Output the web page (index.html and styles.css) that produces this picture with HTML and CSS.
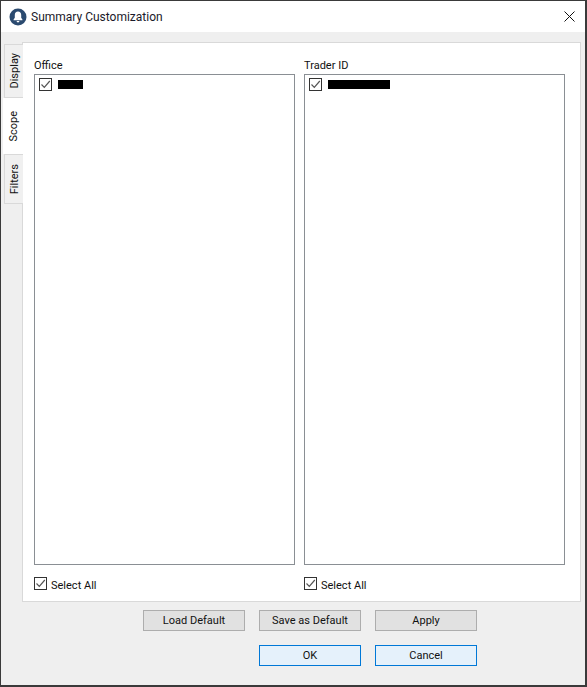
FILE: index.html
```html
<!DOCTYPE html>
<html lang="en">
<head>
<meta charset="utf-8">
<title>Summary Customization</title>
<link rel="stylesheet" href="styles.css">
</head>
<body>
<div class="window">
  <header class="titlebar">
    <svg class="app-icon" width="18" height="18" viewBox="0 0 18 18"><circle cx="9" cy="9" r="8.5" fill="#2b4a6f"/><path d="M9 3.6c-2 0-3.2 1.5-3.2 3.5v2.6L4.6 11.6v.7h8.8v-.7l-1.2-1.900V7.100C12.200 5.100 11 3.600 9 3.600z" fill="#fff"/><path d="M7.600 13h2.800a1.400 1.400 0 0 1-2.800 0z" fill="#fff"/></svg>
    <span class="title">Summary Customization</span>
    <svg class="close" width="11" height="11" viewBox="0 0 11 11"><path d="M.5.500l10 10M10.500.500l-10 10" stroke="#111" stroke-width="1" fill="none"/></svg>
  </header>
  <div class="body">
    <div class="tabbed">
      <nav class="tabs">
        <div class="tab"><span class="tab-label">Display</span></div>
        <div class="tab tab-active"><span class="tab-label">Scope</span></div>
        <div class="tab tab-filters"><span class="tab-label">Filters</span></div>
      </nav>
      <main class="panel">
        <section class="column">
          <label class="field-label">Office</label>
          <div class="listbox">
            <div class="list-row">
              <span class="check"><svg width="11" height="11" viewBox="0 0 11 11"><path d="M1.500 5.500l2.800 2.800 5.500-6.300" stroke="#555" stroke-width="1.200" fill="none"/></svg></span>
              <span class="redact redact-short"></span>
            </div>
          </div>
          <div class="select-all">
            <span class="check"><svg width="11" height="11" viewBox="0 0 11 11"><path d="M1.500 5.500l2.800 2.800 5.500-6.300" stroke="#555" stroke-width="1.200" fill="none"/></svg></span>
            <span class="select-text">Select All</span>
          </div>
        </section>
        <section class="column">
          <label class="field-label">Trader ID</label>
          <div class="listbox">
            <div class="list-row">
              <span class="check"><svg width="11" height="11" viewBox="0 0 11 11"><path d="M1.500 5.500l2.800 2.800 5.500-6.300" stroke="#555" stroke-width="1.200" fill="none"/></svg></span>
              <span class="redact redact-long"></span>
            </div>
          </div>
          <div class="select-all">
            <span class="check"><svg width="11" height="11" viewBox="0 0 11 11"><path d="M1.500 5.500l2.800 2.800 5.500-6.300" stroke="#555" stroke-width="1.200" fill="none"/></svg></span>
            <span class="select-text">Select All</span>
          </div>
        </section>
      </main>
    </div>
    <div class="button-row row-one">
      <button class="btn">Load Default</button>
      <button class="btn">Save as Default</button>
      <button class="btn">Apply</button>
    </div>
    <div class="button-row row-two">
      <button class="btn btn-blue">OK</button>
      <button class="btn btn-blue">Cancel</button>
    </div>
  </div>
</div>
</body>
</html>
```
FILE: styles.css
```css
* { box-sizing: border-box; }
html, body { margin: 0; padding: 0; }
body {
  width: 587px;
  height: 687px;
  font-family: Roboto, "Open Sans", sans-serif;
  font-size: 11px;
  color: #111;
  overflow: hidden;
}
.window {
  width: 587px;
  height: 687px;
  border: 1px solid #3a3a3a;
  border-width: 1px 2px 2px 1px;
  display: flex;
  flex-direction: column;
  background: #efefef;
}
.titlebar {
  height: 31px;
  flex: none;
  background: #fff;
  display: flex;
  align-items: center;
  padding: 0 10px 0 8px;
}
.app-icon { flex: none; }
.title { margin-left: 4px; font-size: 12px; color: #1a1a2a; flex: 1; }
.close { flex: none; }
.body { flex: 1; display: flex; flex-direction: column; padding: 10px 4px 0 2px; }
.tabbed { display: flex; height: 560px; flex: none; }
.tabs { width: 20px; flex: none; padding-top: 2px; display: flex; flex-direction: column; position: relative; z-index: 1; margin-right: -1px; }
.tab {
  width: 19px;
  height: 54px;
  margin-left: 1px;
  background: #f0f0f0;
  border: 1px solid #d9d9d9;
  border-right: none;
  display: flex;
  align-items: center;
  justify-content: center;
}
.tab-active { width: 20px; height: 56px; margin-left: 0; background: #fff; border: none; }
.tab-filters { height: 50px; }
.tab-label { writing-mode: vertical-rl; transform: rotate(180deg); line-height: 1; }
.panel {
  flex: 1;
  background: #fff;
  border: 1px solid #d9d9d9;
  padding: 14px 15px 0 11px;
  display: flex;
  gap: 9px;
}
.column { width: 261px; flex: none; display: flex; flex-direction: column; }
.field-label { height: 17px; line-height: 18px; }
.listbox { height: 491px; border: 1px solid #8a8f94; background: #fff; padding: 3px 4px; }
.list-row { display: flex; align-items: center; gap: 6px; }
.check {
  width: 13px;
  height: 13px;
  flex: none;
  border: 1px solid #333;
  background: #fff;
  display: flex;
  align-items: center;
  justify-content: center;
}
.redact { height: 9px; background: #000; }
.redact-short { width: 25px; }
.redact-long { width: 62px; }
.select-all { display: flex; align-items: center; gap: 4px; margin-top: 12px; height: 13px; }
.select-text { line-height: 15px; height: 15px; margin-top: 4px; }
.button-row { display: flex; gap: 14px; flex: none; }
.row-one { margin-top: 8px; padding-left: 140px; }
.row-two { margin-top: 14px; padding-left: 256px; }
.btn {
  width: 102px;
  height: 21px;
  padding: 0 0 1px;
  font: inherit;
  color: #111;
  background: #e1e1e1;
  border: 1px solid #adadad;
}
.btn-blue { background: #e5f1fb; border-color: #0078d7; }
```
